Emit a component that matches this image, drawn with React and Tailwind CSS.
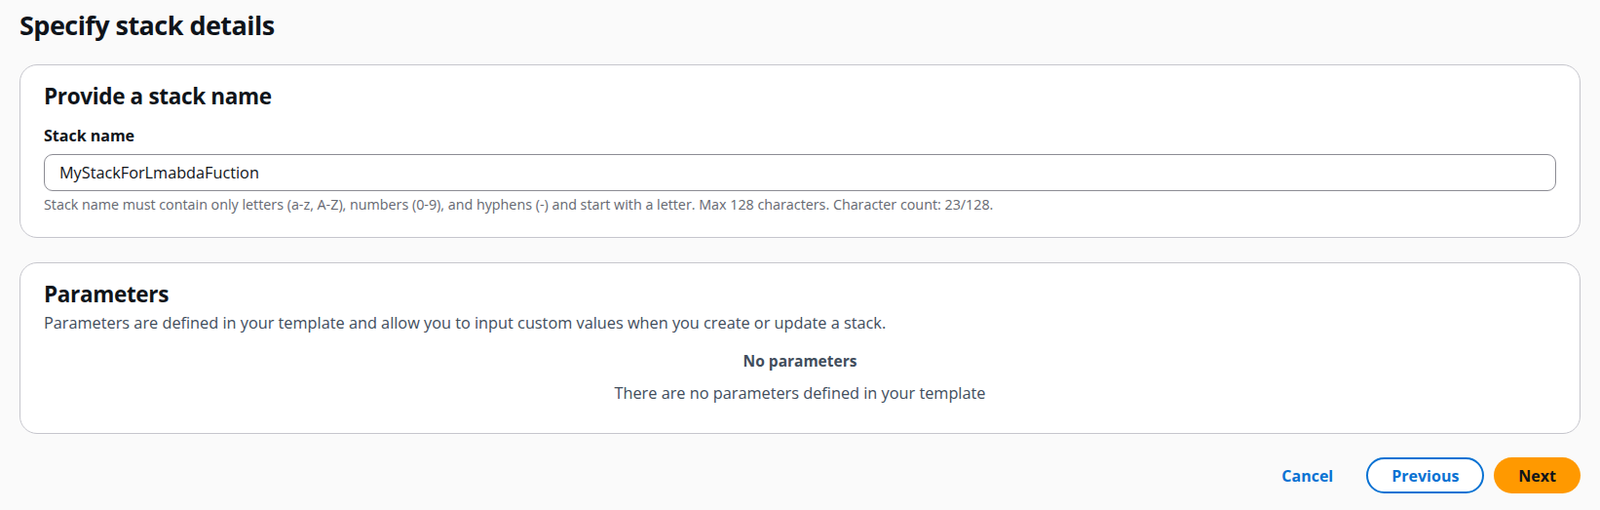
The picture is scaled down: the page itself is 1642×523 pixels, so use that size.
import React from 'react';

const font = { fontFamily: '"Open Sans", "Noto Sans", Arial, sans-serif' };

function Card({ children, className = '' }) {
  return (
    <div className={`rounded-[18px] border border-[#c6c6cd] bg-white px-6 ${className}`}>
      {children}
    </div>
  );
}

export default function App() {
  return (
    <div style={font} className="min-h-[523px] bg-[#fafafa] px-5 pt-[9px] text-[#0f141a]">
      <h1 className="text-[27px] font-bold leading-[34px] tracking-[-0.02em]">Specify stack details</h1>

      <Card className="mt-[23px] pt-[18px] pb-[24px]">
        <h2 className="text-[22.5px] font-bold leading-[28px] tracking-[-0.015em]">Provide a stack name</h2>
        <label className="mt-[15px] block text-[16px] font-bold leading-[23px]">Stack name</label>
        <input
          type="text"
          defaultValue="MyStackForLmabdaFuction"
          className="mt-[7px] block h-[38px] w-full rounded-[9px] border border-[#8c8c94] bg-white pl-[15px] text-[16.25px] leading-[23px] text-[#0f141a] outline-none"
        />
        <p className="mt-[5px] text-[14.3px] leading-[18px] text-[#656871]">
          Stack name must contain only letters (a-z, A-Z), numbers (0-9), and hyphens (-) and start with a letter. Max 128 characters. Character count: 23/128.
        </p>
      </Card>

      <Card className="mt-[25px] pt-[18px] pb-[29px]">
        <h2 className="text-[22.5px] font-bold leading-[28px] tracking-[-0.015em]">Parameters</h2>
        <p className="mt-[4px] text-[16.3px] leading-[23px] text-[#414d5c]">
          Parameters are defined in your template and allow you to input custom values when you create or update a stack.
        </p>
        <div className="mt-[16px] text-center text-[#414d5c]">
          <p className="text-[15.5px] font-bold leading-[23px]">No parameters</p>
          <p className="mt-[10px] text-[16.3px] leading-[23px]">There are no parameters defined in your template</p>
        </div>
      </Card>

      <div className="mt-[24px] flex justify-end gap-[10px]">
        <button type="button" className="h-[37px] rounded-full px-[24px] text-[16px] font-bold text-[#0972d3]">
          Cancel
        </button>
        <button
          type="button"
          className="h-[37px] rounded-full border-2 border-[#0972d3] bg-white px-[24px] text-[16px] font-bold text-[#0972d3]"
        >
          Previous
        </button>
        <button
          type="button"
          className="h-[37px] rounded-full bg-[#ff9900] px-[25px] text-[16px] font-bold text-[#0f141a]"
        >
          Next
        </button>
      </div>
    </div>
  );
}
